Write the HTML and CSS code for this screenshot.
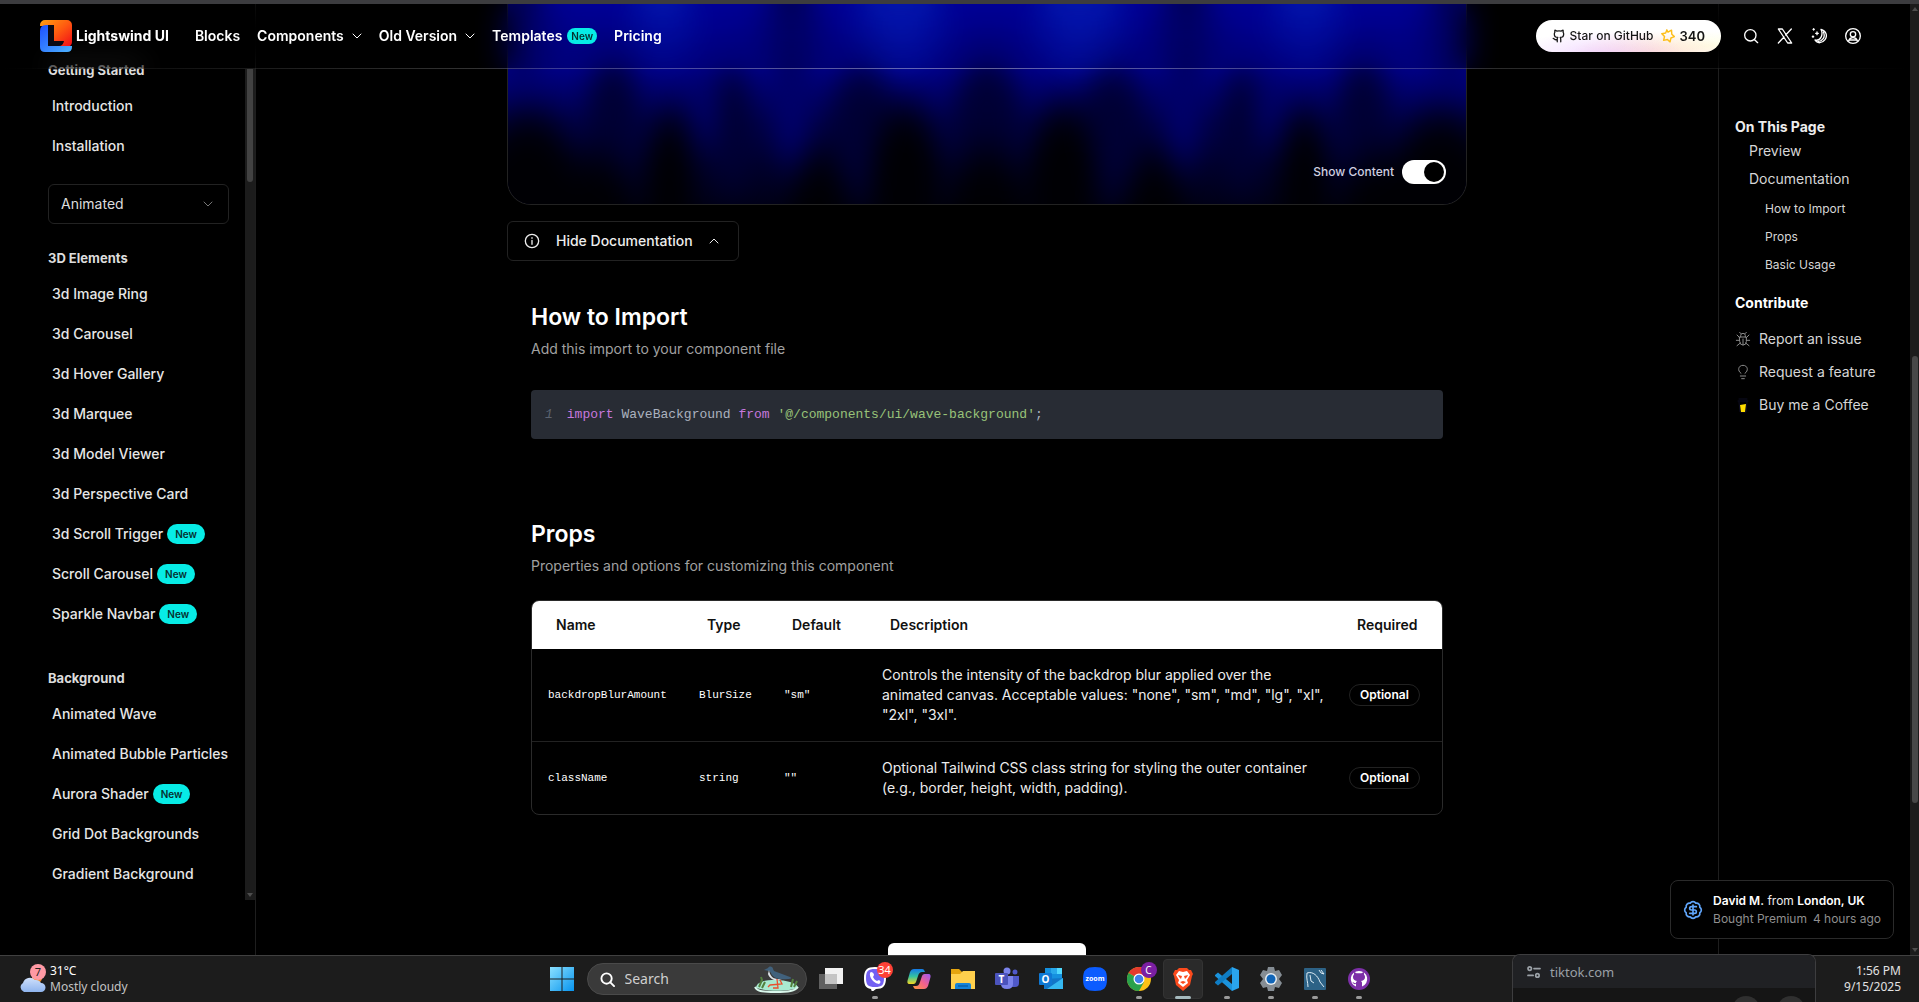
FILE: index.html
```html
<!DOCTYPE html>
<html lang="en">
<head>
<meta charset="utf-8">
<title>Wave Background - Lightswind UI</title>
<link rel="stylesheet" href="styles.css">
</head>
<body>
<div class="window-edge"></div>
<div class="viewport">
  <header class="header">
    <a class="brand" href="#">
      <svg class="logo" viewBox="0 0 32 32" aria-hidden="true">
        <defs>
          <linearGradient id="lo" x1="0" y1="0" x2="1" y2="1"><stop offset="0" stop-color="#ffa010"/><stop offset=".5" stop-color="#ff5a10"/><stop offset="1" stop-color="#f00818"/></linearGradient>
          <linearGradient id="lb" x1="0" y1="0" x2="1" y2="1"><stop offset="0" stop-color="#1d4fff"/><stop offset="1" stop-color="#4db4ff"/></linearGradient>
        </defs>
        <path d="M5 0h22a5 5 0 0 1 5 5v17a5 5 0 0 1-5 5H8V6H0V5a5 5 0 0 1 5-5z" fill="url(#lo)"/>
        <path d="M0 11q0-6 6-6h2v21h24v1q0 5-5 5H5q-5 0-5-5z" fill="url(#lb)"/>
        <path d="M8 5h6v16h10q-1 5-5 5H8z" fill="#0b0a12"/>
      </svg>
      <span>Lightswind UI</span>
    </a>
    <nav class="nav" aria-label="Main">
      <a href="#">Blocks</a>
      <a href="#">Components <svg class="chev" viewBox="0 0 10 6"><path d="M1 1l4 4 4-4"/></svg></a>
      <a href="#">Old Version <svg class="chev" viewBox="0 0 10 6"><path d="M1 1l4 4 4-4"/></svg></a>
      <a class="tight" href="#">Templates <span class="pill pill-nav">New</span></a>
      <a href="#">Pricing</a>
    </nav>
    <div class="tools">
      <a class="github" href="#">
        <svg class="ic14" viewBox="0 0 24 24" stroke-width="2.2"><path d="M15 22v-4a4.800 4.800 0 0 0-1-3.500c3 0 6-2 6-5.500.08-1.250-.27-2.480-1-3.500.28-1.150.28-2.350 0-3.500 0 0-1 0-3 1.500-2.640-.5-5.360-.5-8 0C6 2 5 2 5 2c-.3 1.150-.3 2.350 0 3.500A5.400 5.400 0 0 0 4 9c0 3.500 3 5.500 6 5.500-.39.490-.68 1.050-.85 1.650S8.930 17.380 9 18v4M9 18c-4.510 2-5-2-7-2"/></svg>
        <span>Star on GitHub</span>
        <svg class="ic14 star" viewBox="0 0 24 24" stroke-width="2.500"><path d="M12 5.500 18 2l.5 7 4.500 4-6 2.500-1.500 6.500-4.500-4-6.500 1.500L6 13 1.500 8 8 7 10 1.500z"/></svg>
        <b>340</b>
      </a>
      <a href="#" aria-label="Search"><svg class="ic16" viewBox="0 0 24 24"><circle cx="11" cy="11" r="8.500"/><path d="M17.500 17.500 22 22"/></svg></a>
      <a href="#" aria-label="X"><svg class="ic16" viewBox="0 0 24 24"><path d="M2 1.500h6L22 22.500h-6zM21.500 1.500l-8.500 9M10.500 13.500 2 22.500"/></svg></a>
      <button type="button" aria-label="Theme"><svg class="ic16" viewBox="0 0 24 24"><path d="M15 2c8 2 10 10 6 15.500S9.500 24 6 18c8 2 13-7 9-16zM18.500 6c4 8-2 14-8 14.500M4 1v2M3 2h2M9 6v4M7 8h4M3 12v2M2 13h2"/></svg></button>
      <button type="button" aria-label="Account"><svg class="ic16" viewBox="0 0 24 24"><circle cx="12" cy="12" r="11"/><circle cx="12" cy="9.500" r="4"/><path d="M5.500 19c2-6 11-6 13 0M7 18h10"/></svg></button>
    </div>
  </header>

  <div class="layout">
    <aside class="sidebar">
      <div class="side-body">
        <section>
          <h3>Getting Started</h3>
          <a href="#">Introduction</a>
          <a href="#">Installation</a>
        </section>
        <div class="select">
          <select aria-label="Category"><option>Animated</option></select>
          <svg class="chev" viewBox="0 0 10 6"><path d="M1 1l4 4 4-4"/></svg>
        </div>
        <section>
          <h3>3D Elements</h3>
          <a href="#">3d Image Ring</a>
          <a href="#">3d Carousel</a>
          <a href="#">3d Hover Gallery</a>
          <a href="#">3d Marquee</a>
          <a href="#">3d Model Viewer</a>
          <a href="#">3d Perspective Card</a>
          <a href="#">3d Scroll Trigger <span class="pill">New</span></a>
          <a href="#">Scroll Carousel <span class="pill">New</span></a>
          <a href="#">Sparkle Navbar <span class="pill">New</span></a>
        </section>
        <section>
          <h3>Background</h3>
          <a href="#">Animated Wave</a>
          <a href="#">Animated Bubble Particles</a>
          <a href="#">Aurora Shader <span class="pill">New</span></a>
          <a href="#">Grid Dot Backgrounds</a>
          <a href="#">Gradient Background</a>
        </section>
      </div>
      <div class="side-scroll"><span class="thumb"></span><span class="arrow-down"></span></div>
    </aside>

    <main class="main">
      <div class="preview">
        <svg class="waves" viewBox="0 0 960 200" preserveAspectRatio="none" aria-hidden="true">
          <defs>
            <linearGradient id="sky" x1="0" y1="0" x2="0" y2="1"><stop offset="0" stop-color="#0000aa"/><stop offset=".3" stop-color="#00008a"/><stop offset=".42" stop-color="#000070"/><stop offset=".6" stop-color="#000048"/><stop offset=".8" stop-color="#00002c"/><stop offset="1" stop-color="#000018"/></linearGradient>
            <filter id="b1" x="-20%" y="-50%" width="140%" height="200%" color-interpolation-filters="sRGB"><feGaussianBlur stdDeviation="12 20"/></filter>
          </defs>
          <rect width="960" height="200" fill="url(#sky)"/>
          <g filter="url(#b1)">
            <g fill="#0418c0"><ellipse cx="155" cy="0" rx="30" ry="40"/><ellipse cx="393" cy="2" rx="42" ry="50"/><ellipse cx="573" cy="2" rx="42" ry="50"/><ellipse cx="800" cy="0" rx="34" ry="40"/></g>
            <g fill="#000060"><ellipse cx="15" cy="20" rx="20" ry="60"/><ellipse cx="284" cy="20" rx="22" ry="60"/><ellipse cx="680" cy="20" rx="22" ry="60"/><ellipse cx="945" cy="20" rx="20" ry="60"/></g>
            <g fill="#000034"><ellipse cx="105" cy="115" rx="26" ry="60"/><ellipse cx="225" cy="125" rx="18" ry="60"/><ellipse cx="355" cy="125" rx="32" ry="60"/><ellipse cx="480" cy="125" rx="34" ry="70"/><ellipse cx="605" cy="125" rx="32" ry="60"/><ellipse cx="735" cy="125" rx="18" ry="60"/><ellipse cx="857" cy="115" rx="26" ry="60"/></g>
            <g fill="#00006a"><ellipse cx="200" cy="104" rx="12" ry="30"/><ellipse cx="284" cy="110" rx="18" ry="50"/><ellipse cx="676" cy="110" rx="18" ry="50"/><ellipse cx="760" cy="104" rx="12" ry="30"/></g>
            <g fill="#000004"><ellipse cx="20" cy="196" rx="50" ry="84"/><ellipse cx="90" cy="210" rx="34" ry="60"/><ellipse cx="162" cy="195" rx="24" ry="84"/><ellipse cx="312" cy="218" rx="30" ry="66"/><ellipse cx="398" cy="180" rx="34" ry="76"/><ellipse cx="480" cy="212" rx="38" ry="68"/><ellipse cx="556" cy="180" rx="34" ry="76"/><ellipse cx="648" cy="218" rx="30" ry="66"/><ellipse cx="798" cy="195" rx="24" ry="84"/><ellipse cx="870" cy="210" rx="34" ry="60"/><ellipse cx="935" cy="196" rx="50" ry="84"/></g>
          </g>
        </svg>
        <label class="toggle">Show Content <input type="checkbox" role="switch" checked></label>
      </div>

      <button class="doc-toggle" type="button">
        <svg class="ic16" viewBox="0 0 24 24"><circle cx="12" cy="12" r="10"/><path d="M12 11v6M12 7v1"/></svg>
        <span>Hide Documentation</span>
        <svg class="chev" viewBox="0 0 10 6"><path d="M1 5l4-4 4 4"/></svg>
      </button>

      <section class="doc">
        <h2>How to Import</h2>
        <p>Add this import to your component file</p>
        <pre class="code"><i>1</i><code><span class="kw">import</span> WaveBackground <span class="kw">from</span> <span class="str">'@/components/ui/wave-background'</span>;</code></pre>
      </section>

      <section class="doc props">
        <h2>Props</h2>
        <p>Properties and options for customizing this component</p>
        <div class="table-wrap">
          <table>
            <colgroup><col class="c-name"><col class="c-type"><col class="c-def"><col><col class="c-req"></colgroup>
            <thead><tr><th>Name</th><th>Type</th><th>Default</th><th>Description</th><th>Required</th></tr></thead>
            <tbody>
              <tr><td class="mono">backdropBlurAmount</td><td class="mono">BlurSize</td><td class="mono">"sm"</td><td class="desc">Controls the intensity of the backdrop blur applied over the animated canvas. Acceptable values: "none", "sm", "md", "lg", "xl", "2xl", "3xl".</td><td><span class="tag">Optional</span></td></tr>
              <tr><td class="mono">className</td><td class="mono">string</td><td class="mono">""</td><td class="desc">Optional Tailwind CSS class string for styling the outer container (e.g., border, height, width, padding).</td><td><span class="tag">Optional</span></td></tr>
            </tbody>
          </table>
        </div>
      </section>
      <button class="cta" type="button" aria-label="Continue"></button>
    </main>

    <aside class="toc">
      <h3>On This Page</h3>
      <nav aria-label="On this page">
        <div class="toc-links">
          <a href="#">Preview</a>
          <a href="#">Documentation</a>
        </div>
        <div class="toc-links sub">
          <a href="#">How to Import</a>
          <a href="#">Props</a>
          <a href="#">Basic Usage</a>
        </div>
      </nav>
      <h3 class="contribute">Contribute</h3>
      <nav class="links" aria-label="Contribute">
        <a href="#"><svg class="ic16 dim" viewBox="0 0 24 24"><path d="M7 9h10v7a5 5 0 0 1-10 0zM8.500 9V7a3.500 3.500 0 0 1 7 0v2M12 12v9M7 14H2M22 14h-5M7 10 3 6M17 10l4-4M8 18l-5 4M16 18l5 4M9 4 7 2M15 4l2-2"/></svg>Report an issue</a>
        <a href="#"><svg class="ic16 dim" viewBox="0 0 24 24"><path d="M9 14c-6-4-4-12 3-12s9 8 3 12M8 18h8M10 22h4"/></svg>Request a feature</a>
        <a href="#"><svg class="ic16 coffee" viewBox="0 0 16 16"><path d="M4 2h8M3 4h10M4 5l1 10h6l1-10" stroke="#0d0c22" stroke-width="1" fill="none"/><path d="M5 8l6-1-1 8H6z" fill="#fd0" stroke="none"/></svg>Buy me a Coffee</a>
      </nav>
    </aside>
  </div>

  <div class="page-scroll"><span class="arrow-up"></span><span class="thumb"></span><span class="arrow-down"></span></div>

  <div class="toast" role="status">
    <svg class="badge-ic" viewBox="0 0 24 24"><path d="M3.850 8.620a4 4 0 0 1 4.780-4.770 4 4 0 0 1 6.740 0 4 4 0 0 1 4.780 4.780 4 4 0 0 1 0 6.740 4 4 0 0 1-4.770 4.780 4 4 0 0 1-6.750 0 4 4 0 0 1-4.780-4.770 4 4 0 0 1 0-6.760zM16 8h-6a2 2 0 1 0 0 4h4a2 2 0 1 1 0 4H8M12 18V6"/></svg>
    <div>
      <p class="who"><b>David M.</b> from <b>London, UK</b></p>
      <p class="what"><span>Bought Premium</span><span>4 hours ago</span></p>
    </div>
  </div>
</div>

<footer class="taskbar">
  <div class="weather">
    <svg class="cloud" viewBox="0 0 28 30"><defs><linearGradient id="cl" x1="0" y1="0" x2="0" y2="1"><stop offset="0" stop-color="#cfe0fb"/><stop offset="1" stop-color="#8fb4ee"/></linearGradient></defs><circle cx="19" cy="14" r="5" fill="#f08a24"/><path d="M6 28a5 5 0 0 1-1-9 7 7 0 0 1 12-3 6 6 0 0 1 6 3 4.500 4.500 0 0 1 0 9z" fill="url(#cl)"/><circle cx="20" cy="8" r="8" fill="#ff99a4"/><text x="20" y="12" text-anchor="middle" font-size="11" fill="#222">7</text></svg>
    <p>31°C<br><span>Mostly cloudy</span></p>
  </div>
  <div class="apps">
    <button class="app" type="button" aria-label="Start"><svg viewBox="0 0 24 24"><defs><linearGradient id="wn" x1="0" y1="0" x2="24" y2="24" gradientUnits="userSpaceOnUse"><stop offset="0" stop-color="#8be0ff"/><stop offset="1" stop-color="#0794ee"/></linearGradient></defs><path d="M0 0h11.500v11.500H0zM12.500 0H24v11.500H12.500zM0 12.500h11.500V24H0zM12.500 12.500H24V24H12.500z" fill="url(#wn)"/></svg></button>
    <label class="search">
      <svg class="glass" viewBox="0 0 16 16"><circle cx="7" cy="7" r="5.500"/><path d="M11 11l4 4"/></svg>
      <input type="text" placeholder="Search" aria-label="Search">
      <svg class="bird" viewBox="0 0 46 28"><path d="M2 22c2-6 10-7 20-7s20 3 22 7c-4 5-38 5-42 0z" fill="#a9ead0"/><path d="M1 22c2 4 6 5 20 5s20-1 23-5" fill="none" stroke="#d9f7ec" stroke-width="2"/><path d="M10 5l4-2c2-3 5-1 5 1l1 2 16 6c2 1 1 2-2 2-7 1-13 0-16-4-1-2-2-4-3-4z" fill="#41617c"/><path d="M15 5c1 7 5 10 13 9-5 3-12 1-14-5z" fill="#dfe5ea"/><path d="M23 14l1 9h-5M26 15l2 4-12 1-2 2" fill="none" stroke="#e8502e" stroke-width="1.300"/><path d="M5 22l3-7-1-3M8 23l3-6M37 22l2-8M40 22l3-6" fill="none" stroke="#53803e" stroke-width="2"/></svg>
    </label>
    <button class="app" type="button" aria-label="Task view"><svg viewBox="0 0 24 24"><path d="M6 1h18v16H6z" fill="#f1f1f1"/><path d="M0 7h18v15H0z" fill="#777" fill-opacity=".75"/><path d="M6 7h12v10H6z" fill="#c4c4c4"/></svg></button>
    <button class="app run" type="button" aria-label="Viber"><svg viewBox="0 0 24 24"><path d="M12 0c8 0 11 3 11 11s-3 11-10 11l-4 3-1-3C2 21 1 17 1 11 1 3 4 0 12 0z" fill="#fff"/><path d="M12 2c7 0 9 2 9 9s-2 9-9 9-9-2-9-9 2-9 9-9z" fill="#7360f2"/><path d="M8 5c-3 1 0 11 8 12 2-1 2-3 0-4l-2 1c-2-1-3-2-4-4l1-2c0-2-2-3-3-3z" fill="#fff"/></svg><span class="count">34</span></button>
    <button class="app" type="button" aria-label="Copilot"><svg viewBox="0 0 24 24"><defs><linearGradient id="c1" x1="0" y1="0" x2="0" y2="1"><stop offset="0" stop-color="#1479e8"/><stop offset=".5" stop-color="#35c3a0"/><stop offset="1" stop-color="#f5d81f"/></linearGradient><linearGradient id="c2" x1="1" y1="0" x2="0" y2="1"><stop offset="0" stop-color="#9b59f5"/><stop offset=".5" stop-color="#f2618d"/><stop offset="1" stop-color="#ff9a3c"/></linearGradient></defs><path d="M7 2h8c2 0 2 1 3 3h-3c-2 0-3 1-4 4l-2 6c-1 2-2 2-4 2H3c-3 0-3-2-2-5l2-7c1-2 2-3 4-3z" fill="url(#c1)"/><path d="M17 22H9c-2 0-2-1-3-3h3c2 0 3-1 4-4l2-6c1-2 2-2 4-2h2c3 0 3 2 2 5l-2 7c-1 2-2 3-4 3z" fill="url(#c2)"/></svg></button>
    <button class="app" type="button" aria-label="File Explorer"><svg viewBox="0 0 24 24"><path d="M0 2h8l3 3v5H0z" fill="#e5a50f"/><path d="M0 7h9l3-3h12v18H0z" fill="#ffd04d"/><path d="M4 22v-4q0-2 2-2h12q2 0 2 2v4z" fill="#1583d8"/><path d="M7 19h10" stroke="#0a5fa8" stroke-width="1.500"/></svg></button>
    <button class="app" type="button" aria-label="Teams"><svg viewBox="0 0 24 24"><circle cx="12" cy="4" r="3.500" fill="#7b83eb"/><circle cx="20" cy="5" r="2.500" fill="#5059c9"/><path d="M16 9h8v7q0 4-4 4h-4z" fill="#5059c9"/><path d="M6 9h12v8q0 5-6 5t-6-5z" fill="#7b83eb"/><rect y="6" width="13" height="12" rx="1" fill="#4b53bc"/><text x="6.500" y="15.500" text-anchor="middle" font-size="10" font-weight="700" fill="#fff">T</text></svg></button>
    <button class="app" type="button" aria-label="Outlook"><svg viewBox="0 0 24 24"><path d="M6 1h17v12H6z" fill="#1490df"/><path d="M12 1h6v6h-6z" fill="#28a8ea"/><path d="M18 1h5v6h-5z" fill="#50d9ff"/><path d="M5 12l19-1v11H5z" fill="#1276c8"/><path d="M24 11v11H8z" fill="#35b8f1"/><rect y="6" width="13" height="12" rx="1" fill="#0f78d4"/><text x="6.500" y="15.500" text-anchor="middle" font-size="10" font-weight="700" fill="#fff">O</text></svg></button>
    <button class="app" type="button" aria-label="Zoom"><svg viewBox="0 0 24 24"><path d="M12 0c9 0 12 3 12 12s-3 12-12 12S0 21 0 12 3 0 12 0z" fill="#0b5cff"/><text x="12" y="14" text-anchor="middle" font-size="7" font-weight="700" fill="#fff">zoom</text></svg></button>
    <button class="app run" type="button" aria-label="Chrome"><svg viewBox="0 0 24 24"><circle cx="12" cy="12" r="12" fill="#fbc116"/><path d="M12 12 1.600 6A12 12 0 0 1 22.400 6z" fill="#e33b2e"/><path d="M12 12 1.600 6A12 12 0 0 0 12 24l5-9z" fill="#2aa14b"/><circle cx="12" cy="12" r="5.500" fill="#fff"/><circle cx="12" cy="12" r="4.300" fill="#3f80ec"/></svg><span class="profile">C</span></button>
    <button class="app run active" type="button" aria-label="Brave"><svg viewBox="0 0 24 24"><path d="M8 1h8l2 2h2l2 4-1 2-2 9-7 6-7-6L3 9 2 7l2-4h2z" fill="#fb4a1c"/><path d="M8 4l4 1 4-1 3 4-3 5 1 3-5 4-5-4 1-3-3-5z" fill="#fff"/><path d="M7 8l4 1-1 3-2-2zM17 8l-4 1 1 3 2-2zM9 15l3-1 3 1-3 2z" fill="#fb4a1c"/></svg></button>
    <button class="app run" type="button" aria-label="VS Code"><svg viewBox="0 0 24 24"><path d="M17 7v10L3 5.500 0 8v1l17 15z" fill="#1b93dc"/><path d="M17 0v7L3 18.500 0 16v-1z" fill="#0f7dc4"/><path d="M17 0l7 3v18l-7 3z" fill="#2aa5ee"/></svg></button>
    <button class="app run" type="button" aria-label="Settings"><svg viewBox="0 0 24 24"><path d="M9 0h6l1 4 4-1 3 5-3 4 3 4-3 5-4-1-1 4H9l-1-4-4 1-3-5 3-4-3-4 3-5 4 1z" fill="#858d94"/><circle cx="12" cy="12" r="6" fill="#e8eef2"/><circle cx="12" cy="12" r="4.500" fill="#1065b8"/></svg></button>
    <button class="app run" type="button" aria-label="MySQL Workbench"><svg viewBox="0 0 24 24"><rect x="1" y="1" width="22" height="22" rx="1" fill="#2d6286"/><path d="M5 20c0-5-2-8-1-14 6-2 11 3 13 9l4 5M7 8l1 6 3 2M16 3l2 3 3 1M18 3l3 4" fill="none" stroke="#dcebf4"/></svg></button>
    <button class="app run" type="button" aria-label="GitHub Desktop"><svg viewBox="0 0 24 24"><circle cx="12" cy="12" r="11" fill="#7d2fa8"/><path d="M12 4a8 8 0 0 0-3 15.500V17c-2 .5-3-.5-3.500-2 1.500 0 2 2 3.500 1 0-1 .5-1.500 1-2-3-.5-4-2-4-4 0-1 .5-2 1-2.500 0-1 0-2 .3-2.200 1 0 1.700.7 2.200 1h5c.5-.3 1.200-1 2.200-1 .3.200.3 1.200.3 2.200.5.500 1 1.500 1 2.500 0 2-1 3.500-4 4 .5.500 1 1 1 2v3.500A8 8 0 0 0 12 4z" fill="#fff"/></svg></button>
  </div>
  <p class="clock">1:56 PM<br>9/15/2025</p>
</footer>

<div class="popup">
  <div class="popup-head">
    <svg class="tune" viewBox="0 0 16 14"><circle cx="3" cy="3" r="2"/><path d="M8 3h7M1 11h6"/><circle cx="12" cy="11" r="2"/></svg>
    <span>tiktok.com</span>
  </div>
  <div class="popup-body"><span class="dot"></span><span class="dot"></span></div>
</div>
</body>
</html>
```
FILE: styles.css
```css
* { box-sizing: border-box; }
body {
  margin: 0;
  height: 100vh;
  display: flex;
  flex-direction: column;
  overflow: hidden;
  background: #000;
  color: #ededed;
  font: 14px/20px Inter, "Liberation Sans", sans-serif;
}
a { color: inherit; text-decoration: none; }
h2, h3, p, pre { margin: 0; }
button { font: inherit; color: inherit; background: none; border: 0; padding: 0; }
svg { display: block; flex: none; }
.window-edge { height: 4px; background: #3c3c3f; flex: none; }
.viewport { position: relative; flex: 1; min-height: 0; overflow: hidden; }

.ic14, .ic16, .chev, .badge-ic, .glass, .tune {
  fill: none; stroke: currentColor; stroke-linecap: round; stroke-linejoin: round;
}
.ic14 { width: 14px; height: 14px; }
.ic16 { width: 16px; height: 16px; stroke-width: 2; }
.chev { width: 10px; height: 6px; stroke-width: 1; }
.dim { color: #8a8a8a; stroke-width: 1.5; }

/* header */
.header {
  position: absolute; top: 0; left: 0; right: 9px; z-index: 2;
  height: 65px; padding: 0 49px 1px 40px;
  display: flex; align-items: center;
  background: rgba(0, 0, 0, .1);
  backdrop-filter: blur(16px);
  color: #fff; font-weight: 600;
}
.header::after {
  content: ""; position: absolute; left: 0; right: 0; bottom: 0; height: 1px;
  background: linear-gradient(90deg, transparent, rgba(255, 255, 255, .4) 50%, transparent);
}
.brand { display: flex; align-items: center; gap: 4px; font-weight: 700; }
.logo { width: 32px; height: 32px; }
.nav { display: flex; align-items: center; gap: 17px; margin-left: 26px; }
.nav a { display: flex; align-items: center; gap: 8px; }
.nav a.tight { gap: 5px; }
.pill {
  background: #07ece6; color: #06302f; border-radius: 10px;
  height: 20px; padding: 0 8px; font-size: 10px; line-height: 20px; font-weight: 600;
}
.pill-nav { height: 16px; line-height: 16px; padding: 0 4px; }
.tools { margin-left: auto; display: flex; align-items: center; gap: 18px; }
.github {
  display: flex; align-items: center; gap: 4px; height: 32px; padding: 0 16px; margin-right: 4px;
  border-radius: 16px; color: #161616; font-size: 12px; font-weight: 500;
  background:
    radial-gradient(ellipse at 35% 110%, rgba(232, 190, 255, .6), transparent 50%),
    radial-gradient(ellipse at 62% 115%, rgba(255, 205, 190, .7), transparent 50%),
    radial-gradient(ellipse at 95% 80%, #ffffe6, transparent 40%), #fff;
}
.github b { font-size: 13px; font-weight: 600; }
.star { margin-left: 4px; color: #fdbf1c; }

/* three-column layout */
.layout { display: flex; height: 100%; padding-right: 9px; }
.sidebar { width: 256px; flex: none; border-right: 1px solid #1e1e1e; display: flex; align-items: flex-start; }
.side-body { flex: 1; padding: 56px 16px 0 48px; display: flex; flex-direction: column; }
.side-body h3 { font-size: 13px; line-height: 20px; font-weight: 700; margin-bottom: 6px; color: #dcdcdc; }
.side-body section a { display: flex; align-items: center; gap: 4px; height: 40px; padding-left: 4px; font-weight: 500; white-space: nowrap; color: #e6e6e6; }
.side-body section + section { margin-top: 34px; }
.select { position: relative; margin: 18px 0 24px; }
.select select {
  appearance: none; width: 100%; height: 40px; padding: 0 12px; border: 1px solid #222; border-radius: 6px;
  background: #000; color: #dcdcdc; font: inherit;
}
.select .chev { position: absolute; right: 16px; top: 17px; color: #777; }
.side-scroll { position: relative; width: 10px; height: 831px; max-height: calc(100% - 120px); margin-top: 65px; background: #1c1c1c; flex: none; }
.side-scroll .thumb { display: block; width: 6px; height: 113px; margin: 0 auto; border-radius: 0 0 3px 3px; background: #424242; }
.arrow-down, .arrow-up { position: absolute; left: 50%; margin-left: -3px; border: 3px solid transparent; }
.arrow-down { bottom: 0; border-top: 4px solid #4d4d4d; }
.arrow-up { top: 0; border-bottom: 4px solid #4d4d4d; }

.main { flex: 1; min-width: 0; display: flex; flex-direction: column; align-items: flex-start; width: 100%; max-width: 960px; margin: 0 auto; }
.preview {
  position: relative; width: 100%; height: 201px; flex: none; overflow: hidden;
  border: 1px solid #222; border-top: 0; border-radius: 0 0 24px 24px;
  display: flex; align-items: flex-end; justify-content: flex-end; padding: 20px;
}
.waves { position: absolute; inset: 0; width: 100%; height: 100%; }
.toggle { position: relative; display: flex; align-items: center; gap: 8px; font-size: 12px; font-weight: 500; color: #cfcfe0; }
.toggle input {
  appearance: none; width: 44px; height: 24px; margin: 0; border-radius: 12px; background: #fff;
  display: flex; justify-content: flex-end; padding: 2px;
}
.toggle input::before { content: ""; width: 20px; height: 20px; border-radius: 50%; background: #000; }
.doc-toggle {
  margin-top: 16px; height: 40px; padding: 0 19px 0 16px; flex: none;
  border: 1px solid #222; border-radius: 6px;
  display: flex; align-items: center; gap: 16px; font-weight: 500;
}
.doc { width: 100%; padding: 0 24px; margin-top: 40px; }
.doc.props { margin-top: 79px; }
.doc h2 { font-size: 23px; line-height: 32px; font-weight: 600; color: #fff; margin-bottom: 6px; }
.doc p { color: #a1a1a1; }
.code {
  margin-top: 31px; height: 49px; padding: 0 14px; border-radius: 4px; background: #282c34; color: #abb2bf;
  display: flex; align-items: center; gap: 14px; font: 13px/20px "Liberation Mono", monospace;
}
.code code { font: inherit; }
.code i { color: #5c6370; }
.kw { color: #c678dd; }
.str { color: #98c379; }
.table-wrap { margin-top: 24px; border: 1px solid #2a2a2a; border-radius: 8px; overflow: hidden; }
table { width: 100%; border-collapse: collapse; table-layout: fixed; }
.c-name { width: 151px; }
.c-type { width: 85px; }
.c-def { width: 98px; }
.c-req { width: 109px; }
th { height: 48px; padding: 0 0 0 24px; text-align: left; font-weight: 600; color: #111; background: #fff; }
td { padding: 16px 0 16px 16px; vertical-align: middle; }
td.desc { padding-right: 4px; }
tbody tr + tr td { border-top: 1px solid #222; }
.mono { font: 11px/20px "Liberation Mono", monospace; color: #fff; }
.tag { display: inline-block; border: 1px solid #222; border-radius: 11px; padding: 0 10px; font-size: 12px; line-height: 20px; font-weight: 600; color: #fff; }
.cta { align-self: center; width: 198px; height: 40px; margin-top: 128px; border-radius: 6px; background: #fff; flex: none; }

.toc { width: 192px; flex: none; border-left: 1px solid #1e1e1e; padding: 113px 0 0 16px; display: flex; flex-direction: column; }
.toc h3 { font-size: 14px; line-height: 20px; font-weight: 700; }
.toc-links { display: flex; flex-direction: column; gap: 8px; padding: 4px 0 0 14px; color: #d6d6d6; }
.toc-links.sub { padding: 10px 0 0 30px; font-size: 12px; }
.toc h3.contribute { margin-top: 18px; color: #fff; }
.links { display: flex; flex-direction: column; gap: 13px; margin-top: 16px; color: #d6d6d6; }
.links a { display: flex; align-items: center; gap: 8px; }

.page-scroll { position: absolute; top: 0; right: 0; bottom: 0; width: 9px; background: #1c1c1c; }
.page-scroll .thumb { position: absolute; left: 2px; right: 1px; top: 37%; height: 47%; border-radius: 3px; background: #484848; }

.toast {
  position: absolute; right: 25px; bottom: 16px; z-index: 2; height: 59px; padding: 0 12px;
  border: 1px solid #2a2a2a; border-radius: 8px; background: #000;
  display: flex; align-items: center; gap: 10px; font-size: 12px; line-height: 18px;
}
.badge-ic { width: 20px; height: 20px; color: #60a5fa; stroke-width: 2; }
.who b { font-weight: 600; color: #fff; }
.what { display: flex; gap: 6px; color: #8f8f8f; }

/* taskbar */
.taskbar {
  flex: none; height: 47px; border-top: 1px solid #404040; background: #1c1c1c;
  display: grid; grid-template-columns: 1fr auto 1fr; align-items: center;
  font: 12px/16px "Noto Sans", "Open Sans", sans-serif; color: #fff;
}
.weather { display: flex; align-items: center; gap: 4px; padding-left: 18px; }
.weather span { color: #c4c4c4; }
.cloud { width: 28px; height: 30px; }
.apps { display: flex; align-items: center; padding-left: 1px; }
.app { position: relative; width: 44px; height: 46px; display: flex; align-items: center; justify-content: center; }
.app svg { width: 24px; height: 24px; }
.run::after { content: ""; position: absolute; bottom: 3px; left: 19px; width: 6px; height: 3px; border-radius: 2px; background: #9a9a9a; }
.active::before { content: ""; position: absolute; inset: 3px 2px; border: 1px solid #333; border-radius: 4px; background: #2a2a2a; }
.active svg { position: relative; }
.active::after { left: 14px; width: 16px; background: #a5b9bd; }
.count, .profile {
  position: absolute; top: 6px; right: 4px; height: 16px; width: 16px; border-radius: 8px; background: #ff4136;
  font-size: 11px; line-height: 16px; text-align: center;
}
.profile { background: #7b1fa2; font-size: 10px; }
.search {
  width: 220px; height: 32px; margin: 0 2px 0 3px; padding: 0 6px 0 12px; border-radius: 16px; border: 1px solid #4a4a4a;
  background: #3a3a3a; display: flex; align-items: center; gap: 10px;
}
.glass { width: 15px; height: 15px; stroke-width: 2; }
.search input { flex: 1; min-width: 0; border: 0; padding: 0; background: none; font: 14px/20px "Noto Sans", sans-serif; color: #fff; }
.search input::placeholder { color: #cfcfcf; }
.bird { width: 46px; height: 28px; }
.clock { justify-self: end; padding-right: 18px; text-align: right; color: #e2e2e2; }

/* link preview window peeking over the taskbar */
.popup {
  position: absolute; right: 103px; bottom: 0; z-index: 3; width: 304px; height: 48px; overflow: hidden;
  border: 1px solid #3d3d3f; border-bottom: 0; border-radius: 8px 8px 0 0; background: #151515;
}
.popup-head { height: 33px; padding: 0 14px; background: #202124; color: #9aa0a6; display: flex; align-items: center; gap: 9px; font: 13px/20px "Noto Sans", sans-serif; }
.tune { width: 14px; height: 12px; stroke-width: 2; }
.popup-body { display: flex; justify-content: flex-end; gap: 17px; padding: 8px 10px 0; }
.dot { width: 28px; height: 28px; border-radius: 50%; background: #303030; }
```
